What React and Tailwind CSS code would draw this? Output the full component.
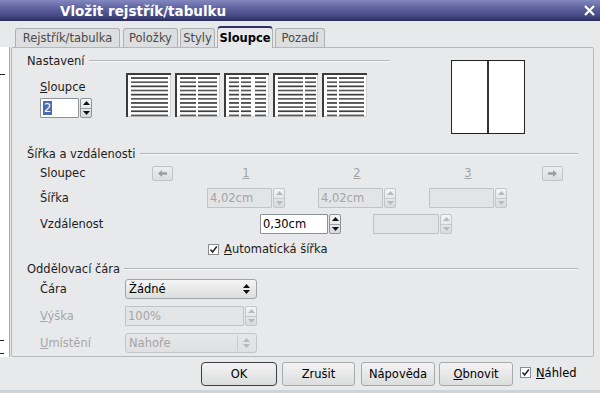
import React from "react";

function Tri({ up, color }) {
  return (
    <svg width="7" height="4" viewBox="0 0 7 4">
      <path d={up ? "M0 4 L3.5 0 L7 4Z" : "M0 0 L3.5 4 L7 0Z"} fill={color} />
    </svg>
  );
}

function SpinButtons({ disabled }) {
  const c = disabled ? "#b6babd" : "#111";
  return (
    <div
      className={`ml-[1px] w-[12px] h-full flex flex-col rounded-[2px] border overflow-hidden bg-gradient-to-b from-[#f4f4f4] to-[#d9dadb] ${
        disabled ? "border-[#c3c6c8]" : "border-[#8f9498]"
      }`}
    >
      <div className="flex-1 flex items-center justify-center">
        <Tri up color={c} />
      </div>
      <div className={`h-px ${disabled ? "bg-[#c8cacc]" : "bg-[#9a9ea2]"}`} />
      <div className="flex-1 flex items-center justify-center">
        <Tri color={c} />
      </div>
    </div>
  );
}

function SpinField({ width, value, disabled, selected }) {
  return (
    <div className={`flex h-[20px] ${width}`}>
      <div
        className={`flex-1 flex items-center pl-[2px] border rounded-[1px] ${
          disabled
            ? "border-[#c0c3c6] bg-[#e3e4e5] text-[#a3a5a7]"
            : "border-[#8d9297] bg-white text-black"
        }`}
      >
        {selected ? (
          <span className="bg-[#4d6cab] text-white px-[1px]">{value}</span>
        ) : (
          value
        )}
      </div>
      <SpinButtons disabled={disabled} />
    </div>
  );
}

function Select({ value, disabled }) {
  const c = disabled ? "#b6babd" : "#111";
  return (
    <div
      className={`w-[132px] h-[20px] flex items-center pl-[3px] pr-[6px] border rounded-[3px] bg-gradient-to-b ${
        disabled
          ? "border-[#c3c6c8] from-[#e6e7e8] to-[#dfe0e1] text-[#a3a5a7]"
          : "border-[#a2a5a8] from-[#f5f5f5] to-[#dcdddd] text-black"
      }`}
    >
      <span className="flex-1">{value}</span>
      {disabled && <div className="w-px h-[16px] bg-[#c8cacc] mr-[5px]" />}
      <svg width="7" height="10" viewBox="0 0 7 10">
        <path d="M0 4 L3.5 0 L7 4Z M0 6 L3.5 10 L7 6Z" fill={c} />
      </svg>
    </div>
  );
}

function Header({ title }) {
  return (
    <div className="flex items-center h-[12px]">
      <span>{title}</span>
      <div className="flex-1 ml-[4px] h-[2px] border-t border-t-[#b2b5b7] border-b border-b-[#f8f8f8]" />
    </div>
  );
}

function ArrowBtn({ left, extra }) {
  return (
    <div
      className={`w-[21px] h-[15px] flex items-center justify-center rounded-[2px] border border-[#c1c4c6] bg-gradient-to-b from-[#eeeeef] to-[#dcdddf] ${extra}`}
    >
      <svg width="9" height="7" viewBox="0 0 9 7">
        {left ? (
          <path d="M0 3.5 L4 0 V2.3 H9 V4.7 H4 V7Z" fill="#9a9ea2" />
        ) : (
          <path d="M9 3.5 L5 0 V2.3 H0 V4.7 H5 V7Z" fill="#9a9ea2" />
        )}
      </svg>
    </div>
  );
}

function Check() {
  return (
    <div className="w-[11px] h-[11px] border border-[#8a8d90] bg-white flex items-center justify-center">
      <svg width="9" height="9" viewBox="0 0 9 9">
        <path d="M1.5 4.5 L3.6 7 L7.8 1.5" stroke="#222" strokeWidth="1.5" fill="none" />
      </svg>
    </div>
  );
}

function ColIcon({ cols }) {
  const lines = Array.from({ length: 10 }, (_, i) => 4.2 + i * 4.15);
  return (
    <svg width="45" height="44" viewBox="0 0 45 44">
      <rect x="0" y="0" width="45" height="44" fill="#ffffff" />
      <path d="M44.5 0 V43.5 H0" stroke="#d0d2d4" strokeWidth="1" fill="none" />
      <path d="M1 44 V1 H45" stroke="#3c3c3c" strokeWidth="2" fill="none" />
      {cols.map(([x, w], ci) =>
        lines.map((y, li) => (
          <rect
            key={`${ci}-${li}`}
            x={x}
            y={y}
            width={w}
            height="1.7"
            fill={li % 2 ? "#5a5a5a" : "#3e3e3e"}
          />
        ))
      )}
    </svg>
  );
}

const ICONS = [
  [[5, 37]],
  [
    [5, 16],
    [23, 19],
  ],
  [
    [5, 10],
    [17, 10],
    [31, 11],
  ],
  [
    [5, 25],
    [32, 11],
  ],
  [
    [5, 10],
    [17, 25],
  ],
];

export default function App() {
  return (
    <div className="w-[600px] h-[393px] bg-[#e8e9ea] flex flex-col overflow-hidden text-[11.5px] leading-[14px] text-[#1c1c1c] font-['DejaVu_Sans',sans-serif]">
      {/* Title bar */}
      <div className="h-[21px] shrink-0 flex items-center pl-[60px] pr-[5px] bg-[linear-gradient(to_bottom,#8388bf_0%,#6166a4_35%,#454a85_75%,#2a2d5a_100%)]">
        <span className="text-white font-bold text-[13.5px] leading-[16px]">
          Vložit rejstřík/tabulku
        </span>
        <div className="ml-auto">
          <svg width="11" height="11" viewBox="0 0 11 11">
            <path d="M1 1 L10 10 M10 1 L1 10" stroke="#fff" strokeWidth="2.2" />
          </svg>
        </div>
      </div>

      {/* Tabs */}
      <div className="h-[26px] shrink-0 flex items-end pl-[15px]">
        <div className="w-[105px] h-[19px] flex items-center justify-center rounded-t-[3px] border border-b-0 border-[#aeb1b4] bg-[#dcdedf] text-[#4a4a4a]">
          Rejstřík/tabulka
        </div>
        <div className="ml-[3px] w-[55px] h-[19px] flex items-center justify-center rounded-t-[3px] border border-b-0 border-[#aeb1b4] bg-[#dcdedf] text-[#4a4a4a]">
          Položky
        </div>
        <div className="ml-[2px] w-[35px] h-[19px] flex items-center justify-center rounded-t-[3px] border border-b-0 border-[#aeb1b4] bg-[#dcdedf] text-[#4a4a4a]">
          Styly
        </div>
        <div className="relative z-10 -mb-px ml-[2px] w-[56px] h-[22px] flex items-center justify-center rounded-t-[4px] border border-b-0 border-[#aeb1b4] border-t-2 border-t-[#2f3363] bg-[#e8e9ea] font-bold text-black">
          Sloupce
        </div>
        <div className="ml-[2px] w-[50px] h-[19px] flex items-center justify-center rounded-t-[3px] border border-b-0 border-[#aeb1b4] bg-[#dcdedf] text-[#4a4a4a]">
          Pozadí
        </div>
      </div>

      {/* Body */}
      <div className="flex shrink-0">
        <div className="w-[10px] h-[310px] bg-white border-r border-[#a7aaad] flex flex-col">
          <div className="mt-[27px] w-[5px] h-px bg-[#222]" />
          <div className="mt-auto mb-[12px] w-[4px] h-px bg-[#222]" />
          <div className="mb-[3px] w-[4px] h-px bg-[#222]" />
        </div>
        <div className="ml-px w-[583px] h-[310px] border border-[#b5b8ba] rounded-[2px] flex flex-col px-[15px]">
          {/* Section 1 */}
          <div className="flex">
            <div className="w-[363px] flex flex-col">
              <div className="mt-[7px]">
                <Header title="Nastavení" />
              </div>
              <div className="flex mt-[6px]">
                <div className="w-[99px] pl-[13px] flex flex-col">
                  <div className="mt-[7px]">
                    <span className="underline">S</span>loupce
                  </div>
                  <div className="mt-[4px]">
                    <SpinField width="w-[52px]" value="2" selected />
                  </div>
                </div>
                <div className="flex gap-[4px]">
                  {ICONS.map((c, i) => (
                    <ColIcon key={i} cols={c} />
                  ))}
                </div>
              </div>
            </div>
            <div className="ml-[61px] mt-[12px] w-[74px] h-[74px] border-[1.5px] border-[#222] bg-white flex">
              <div className="flex-1" />
              <div className="w-[2px] bg-[#333]" />
              <div className="flex-1" />
            </div>
          </div>

          {/* Section 2 */}
          <div className="mt-[14px]">
            <Header title="Šířka a vzdálenosti" />
          </div>
          <div className="mt-[4px] h-[18px] flex items-center pl-[13px]">
            <span className="w-[112px]">Sloupec</span>
            <ArrowBtn left extra="" />
            <div className="ml-[34px] w-[78px] text-center text-[#a3a5a7]">
              <span className="underline">1</span>
            </div>
            <div className="ml-[33px] w-[78px] text-center text-[#a3a5a7]">
              <span className="underline">2</span>
            </div>
            <div className="ml-[33px] w-[78px] text-center text-[#a3a5a7]">
              <span className="underline">3</span>
            </div>
            <ArrowBtn extra="ml-[35px]" />
          </div>
          <div className="mt-[6px] h-[20px] flex items-center pl-[13px]">
            <span className="w-[167px]">Šířka</span>
            <SpinField width="w-[78px]" value="4,02cm" disabled />
            <div className="ml-[33px]">
              <SpinField width="w-[78px]" value="4,02cm" disabled />
            </div>
            <div className="ml-[33px]">
              <SpinField width="w-[78px]" value="" disabled />
            </div>
          </div>
          <div className="mt-[6px] h-[20px] flex items-center pl-[13px]">
            <span className="w-[220px]">Vzdálenost</span>
            <SpinField width="w-[81px]" value="0,30cm" />
            <div className="ml-[32px]">
              <SpinField width="w-[79px]" value="" disabled />
            </div>
          </div>
          <div className="mt-[7px] h-[16px] flex items-center pl-[181px]">
            <Check />
            <span className="ml-[5px]">
              <span className="underline">A</span>utomatická šířka
            </span>
          </div>

          {/* Section 3 */}
          <div className="mt-[6px]">
            <Header title="Oddělovací čára" />
          </div>
          <div className="mt-[4px] h-[20px] flex items-center pl-[13px]">
            <span className="w-[85px]">Čára</span>
            <Select value="Žádné" />
          </div>
          <div className="mt-[7px] h-[20px] flex items-center pl-[13px]">
            <span className="w-[85px] text-[#a5a7a9]">
              <span className="underline">V</span>ýška
            </span>
            <SpinField width="w-[132px]" value="100%" disabled />
          </div>
          <div className="mt-[7px] h-[20px] flex items-center pl-[13px]">
            <span className="w-[85px] text-[#a5a7a9]">
              <span className="underline">U</span>místění
            </span>
            <Select value="Nahoře" disabled />
          </div>
        </div>
      </div>

      {/* Buttons */}
      <div className="mt-[5px] h-[24px] shrink-0 flex items-center pl-[201px]">
        <div className="w-[76px] h-[24px] flex items-center justify-center rounded-[4px] border border-[#3b3e42] bg-gradient-to-b from-[#f3f3f3] to-[#dcdddd] text-black">
          OK
        </div>
        <div className="ml-[5px] w-[73px] h-[24px] flex items-center justify-center rounded-[3px] border border-[#a7aaad] bg-gradient-to-b from-[#f3f3f3] to-[#dcdddd] text-black">
          Zrušit
        </div>
        <div className="ml-[6px] w-[74px] h-[24px] flex items-center justify-center rounded-[3px] border border-[#a7aaad] bg-gradient-to-b from-[#f3f3f3] to-[#dcdddd] text-black">
          Nápověda
        </div>
        <div className="ml-[4px] w-[74px] h-[24px] flex items-center justify-center rounded-[3px] border border-[#a7aaad] bg-gradient-to-b from-[#f3f3f3] to-[#dcdddd] text-black">
          <span>
            <span className="underline">O</span>bnovit
          </span>
        </div>
        <div className="ml-[7px] -mt-[3px]">
          <Check />
        </div>
        <span className="ml-[5px] -mt-[3px] text-black">
          <span className="underline">N</span>áhled
        </span>
      </div>
      <div className="mt-auto h-[3px] shrink-0 bg-[#cdd3d9]" />
    </div>
  );
}
